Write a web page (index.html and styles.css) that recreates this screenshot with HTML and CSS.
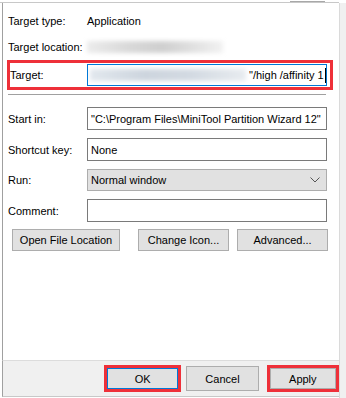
FILE: index.html
```html
<!DOCTYPE html>
<html lang="en">
<head>
    <meta charset="UTF-8">
    <title>Shortcut Properties</title>
    <link rel="stylesheet" href="styles.css">
</head>
<body>
    <div class="window">
        <div class="panel">
            <div class="tab-edge"></div>
            <div class="content">
                <div class="info-row">
                    <span class="label">Target type:</span>
                    <span class="value">Application</span>
                </div>
                <div class="info-row">
                    <span class="label">Target location:</span>
                    <span class="smudge smudge-loc"></span>
                </div>

                <div class="mark target-box">
                    <span class="label">Target:</span>
                    <div class="field focused">
                        <span class="smudge smudge-target"></span>
                        <span class="target-text">"/high /affinity 1</span>
                        <span class="caret"></span>
                    </div>
                </div>

                <div class="separator"></div>

                <div class="form">
                    <span class="label">Start in:</span>
                    <div class="field">"C:\Program Files\MiniTool Partition Wizard 12"</div>

                    <span class="label">Shortcut key:</span>
                    <div class="field">None</div>

                    <span class="label">Run:</span>
                    <div class="field select">
                        <span>Normal window</span>
                        <svg class="chevron" width="10" height="6" viewBox="0 0 10 6">
                            <path d="M0.5 0.5 L5 5 L9.5 0.5" fill="none" stroke="#555" stroke-width="1"/>
                        </svg>
                    </div>

                    <span class="label">Comment:</span>
                    <div class="field"></div>
                </div>

                <div class="actions">
                    <button class="btn btn-open">Open File Location</button>
                    <button class="btn btn-icon">Change Icon...</button>
                    <button class="btn btn-adv">Advanced...</button>
                </div>
            </div>

            <div class="footer">
                <div class="mark ok-box">
                    <button class="btn btn-dialog default">OK</button>
                </div>
                <button class="btn btn-dialog cancel">Cancel</button>
                <div class="mark apply-box">
                    <button class="btn btn-dialog">Apply</button>
                </div>
            </div>
        </div>
        <div class="strip"></div>
    </div>
</body>
</html>
```

FILE: styles.css
```css
* {
    margin: 0;
    padding: 0;
    box-sizing: border-box;
}
body {
    background: #fff;
    font-family: 'Liberation Sans', Arial, sans-serif;
    font-size: 11px;
    color: #000;
}
.window {
    display: flex;
    height: 398px;
    padding-top: 1px;
}
.panel {
    width: 339px;
    padding-left: 2px;
    display: flex;
    flex-direction: column;
}
.tab-edge {
    height: 2px;
    margin-left: -2px;
    background: linear-gradient(to bottom, transparent 1px, #c8c8c8 1px),
                linear-gradient(to right, transparent 290px, #a8a8a8 290px, #a8a8a8 325px, transparent 325px);
    background-size: 100% 100%, 100% 1px;
    background-repeat: no-repeat;
}
.content {
    flex: 1;
    border-left: 1px solid #a0a0a0;
    padding: 7px 0 0 5px;
}
.strip {
    flex: 1;
    margin-top: 2px;
    background: #f0f0f0;
    border-left: 1px solid #dadada;
}
.info-row {
    display: flex;
    align-items: center;
    height: 21px;
    margin-bottom: 5px;
}
.label {
    width: 79px;
    white-space: nowrap;
}
.smudge {
    display: block;
    height: 12px;
    filter: blur(2px);
}
.smudge-loc {
    width: 136px;
    background: linear-gradient(to right, #ececec, #d9d9d9 30%, #cfcfcf 55%, #e2e2e2 80%, #f2f2f2);
}
.mark {
    border: 3px solid #ee3039;
}
.target-box {
    display: flex;
    align-items: center;
    width: 326px;
    height: 30px;
    margin: -2px 0 0 -1px;
    padding-right: 3px;
}
.target-box .label {
    width: 77px;
}
.field {
    height: 23px;
    border: 1px solid #7a7a7a;
    display: flex;
    align-items: center;
    padding-left: 3px;
    white-space: nowrap;
    overflow: hidden;
}
.field.focused {
    flex: 1;
    height: 22px;
    border-color: #0078d7;
    padding-left: 2px;
}
.smudge-target {
    width: 156px;
    background: linear-gradient(to right, #e2e8ee, #cdd5de 35%, #d3dae2 65%, #e8ecf0);
}
.target-text {
    margin-left: 3px;
}
.caret {
    width: 1px;
    height: 15px;
    background: #000;
    margin-left: 1px;
}
.separator {
    height: 1px;
    width: 318px;
    margin: 4px 0 12px 0;
    background: #a0a0a0;
}
.form {
    display: grid;
    grid-template-columns: 79px 240px;
    row-gap: 8px;
    align-items: center;
}
.select {
    height: 22px;
    background: #e1e1e1;
    border-color: #adadad;
    justify-content: space-between;
    padding-right: 6px;
}
.chevron {
    display: block;
}
.actions {
    display: flex;
    margin: 7px 0 0 4px;
}
.btn {
    font-family: inherit;
    font-size: 11px;
    color: #000;
    background: #e1e1e1;
    border: 1px solid #adadad;
    height: 22px;
}
.btn-open {
    width: 108px;
}
.btn-icon {
    width: 91px;
    margin-left: 18px;
}
.btn-adv {
    width: 91px;
    margin-left: 8px;
}
.footer {
    height: 37px;
    background: #f0f0f0;
    border-top: 1px solid #dcdcdc;
    border-left: 1px solid #a0a0a0;
    border-bottom: 1px solid #c8c8c8;
    display: flex;
    align-items: center;
    padding: 0 0 0 101px;
    margin-bottom: 1px;
}
.ok-box, .apply-box {
    width: 78px;
    height: 27px;
}
.btn-dialog {
    width: 100%;
    height: 100%;
}
.btn-dialog.default {
    border-color: #0078d7;
}
.cancel {
    width: 73px;
    height: 25px;
    margin: 0 8px 0 5px;
}
.apply-box {
    width: 73px;
}
```
